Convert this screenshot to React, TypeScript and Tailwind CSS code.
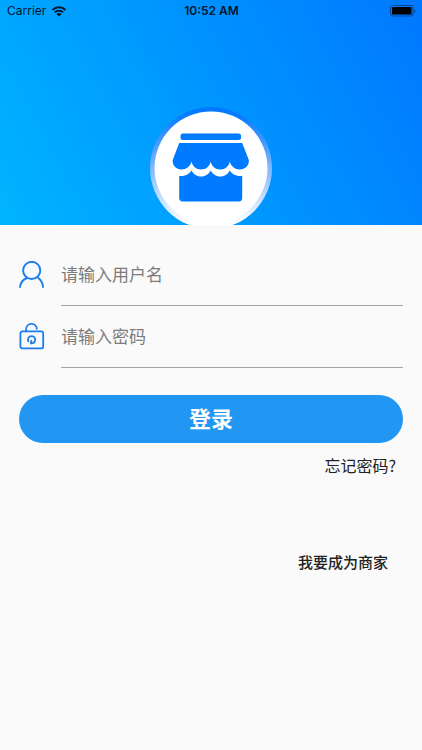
import type { ReactNode } from 'react';

function StatusBar() {
  return (
    <div className="grid h-[22px] w-full grid-cols-3 items-center pl-[7px] pr-[6px] font-['Inter','Liberation_Sans',sans-serif] text-[12px] leading-[22px] text-[#00152e]">
      <div className="flex items-center gap-[6px]">
        <span>Carrier</span>
        <svg width="14" height="11" viewBox="0 0 14 11" fill="none" stroke="currentColor" aria-hidden="true">
          <path d="M0.6 3.9a9 9 0 0 1 12.8 0" strokeWidth="2.1" />
          <path d="M2.9 6.4a5.8 5.8 0 0 1 8.2 0" strokeWidth="1.9" />
          <path d="M7 10.6 4.5 8.2a3.5 3.5 0 0 1 5 0z" fill="currentColor" stroke="none" />
        </svg>
      </div>
      <span className="text-center font-semibold">10:52 AM</span>
      <svg className="justify-self-end" width="26" height="12" viewBox="0 0 26 12" aria-hidden="true">
        <rect x="0.5" y="0.5" width="22.5" height="10.5" rx="2" fill="none" stroke="#00152e" strokeOpacity="0.5" />
        <rect x="2" y="2" width="19.5" height="7.5" rx="0.8" fill="#000" />
        <path d="M24.2 4v4c1.6-.6 1.6-3.4 0-4z" fill="#00152e" fillOpacity="0.5" />
      </svg>
    </div>
  );
}

function StoreLogo() {
  return (
    <svg width="122" height="122" viewBox="0 0 122 122" className="shrink-0" role="img" aria-label="店铺">
      <defs>
        <linearGradient id="ring" x1="0" y1="0" x2="0" y2="1">
          <stop offset="0" stopColor="#0078ff" />
          <stop offset="0.08" stopColor="#0a7dff" />
          <stop offset="0.5" stopColor="#80b8ff" />
          <stop offset="0.95" stopColor="#fff" />
        </linearGradient>
      </defs>
      <circle cx="61" cy="61" r="61" fill="url(#ring)" />
      <circle cx="61" cy="61" r="56.5" fill="#fff" />
      <g fill="#007aff">
        <rect x="30.5" y="26.5" width="60.5" height="6.5" rx="2.5" />
        <path d="M29.2 36H92.2L98.8 53C99.6 58 95 62.5 90.2 62.5C85 62.5 80.8 59 79.8 54.5C78.8 59 75.5 62.5 70.3 62.5C65.1 62.5 61.7 59 60.7 54.5C59.7 59 56.3 62.5 51.1 62.5C45.9 62.5 42.5 59 41.5 54.5C40.5 59 36.4 62.5 31.2 62.5C26.4 62.5 22 58 22.7 53Z" />
        <path d="M29.2 68.8C34.5 69.8 39.5 67 41.5 63.5C43.5 67 46.5 69.5 51.1 69.5C55.7 69.5 58.7 67 60.7 63.5C62.7 67 65.7 69.5 70.3 69.5C74.9 69.5 77.8 67 79.8 63.5C81.8 67 86.7 69.8 92.2 68.8V91C92.2 93 91 94.5 89 94.5H32.5C30.5 94.5 29.2 93 29.2 91Z" />
      </g>
    </svg>
  );
}

function UserIcon() {
  return (
    <svg width="26" height="28" viewBox="0 0 26 28" fill="none" stroke="#1a7df0" strokeWidth="1.9" aria-hidden="true">
      <circle cx="12.7" cy="9.4" r="8.6" />
      <path d="M8 17C3.8 18.6 1.1 22 1 26.8" />
      <path d="M18.8 16.4C22 18.8 24 22.1 24.1 26.8" />
    </svg>
  );
}

function LockIcon() {
  return (
    <svg width="26" height="28" viewBox="0 0 26 28" fill="none" stroke="#1a7df0" strokeWidth="1.8" aria-hidden="true">
      <rect x="1.4" y="8.4" width="22.8" height="17" rx="2" />
      <path d="M7 8.2V6.8C7 3.2 9.3 0.9 12.4 0.9C15.6 0.9 17.8 3.2 17.8 6.4" />
      <path d="M9.6 19C8 16 9.6 13.2 12.6 13.2C15.5 13.2 16.8 15.6 16 17.8C15.4 19.6 14 20.6 12 20.4L12.4 17" />
    </svg>
  );
}

type FieldProps = {
  id: string;
  type: string;
  label: string;
  icon: ReactNode;
};

function Field({ id, type, label, icon }: FieldProps) {
  return (
    <div className="flex h-[62px] items-center gap-4">
      <label htmlFor={id} aria-label={label} className="shrink-0">
        {icon}
      </label>
      <input
        id={id}
        type={type}
        placeholder={label}
        className="h-full min-w-0 flex-1 border-b border-[#a3a3a3] bg-transparent pb-[2px] text-[17px] text-black outline-none placeholder:text-[#7c7c7c]"
      />
    </div>
  );
}

export default function App() {
  return (
    <div className="min-h-screen bg-[#fafafa] font-['Noto_Sans_CJK_SC',sans-serif] text-[#222]">
      <header className="flex h-[225px] flex-col items-center overflow-hidden bg-[linear-gradient(62deg,#00b4ff,#0078ff)]">
        <StatusBar />
        <div className="mt-[85px]">
          <StoreLogo />
        </div>
      </header>

      <form className="flex flex-col px-[19px] pt-[19px]" onSubmit={(e) => e.preventDefault()}>
        <Field id="username" type="text" label="请输入用户名" icon={<UserIcon />} />
        <Field id="password" type="password" label="请输入密码" icon={<LockIcon />} />
        <button
          type="submit"
          className="mt-[27px] h-12 rounded-full bg-[#2196f3] pb-1 text-[22px] font-bold text-white"
        >
          登录
        </button>
      </form>

      <div className="flex flex-col items-end">
        <a href="#forgot" className="mr-[26px] mt-[10px] text-[16px] leading-6">
          忘记密码?
        </a>
        <a href="#merchant" className="mr-[34px] mt-[73px] text-[15px] font-medium leading-6">
          我要成为商家
        </a>
      </div>
    </div>
  );
}
